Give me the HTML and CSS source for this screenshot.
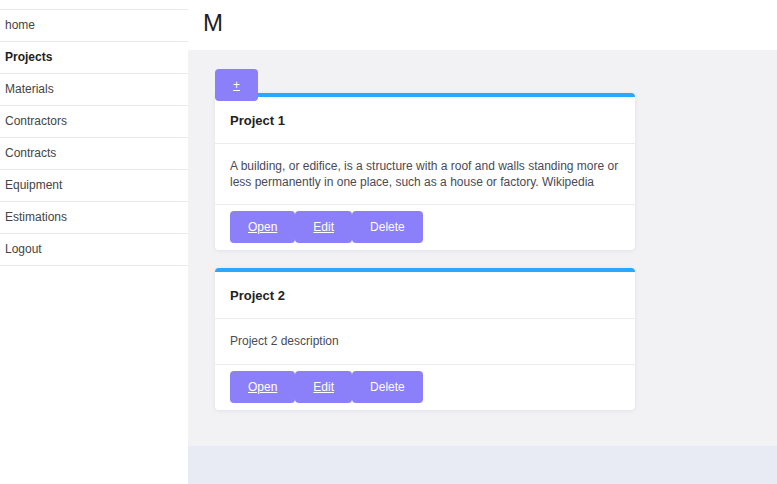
FILE: index.html
```html
<!DOCTYPE html>
<html>
<head>
<meta charset="utf-8">
<link rel="stylesheet" href="styles.css">
</head>
<body>
<div class="layout">
  <aside class="sidebar">
    <ul class="nav">
      <li class="nav-item">home</li>
      <li class="nav-item active">Projects</li>
      <li class="nav-item">Materials</li>
      <li class="nav-item">Contractors</li>
      <li class="nav-item">Contracts</li>
      <li class="nav-item">Equipment</li>
      <li class="nav-item">Estimations</li>
      <li class="nav-item">Logout</li>
    </ul>
  </aside>
  <main class="main">
    <header class="topbar"><h1 class="title">M</h1></header>
    <section class="content">
      <a class="add-btn">+</a>
      <div class="card first">
        <div class="card-header">Project 1</div>
        <div class="card-body">A building, or edifice, is a structure with a roof and walls standing more or less permanently in one place, such as a house or factory. Wikipedia</div>
        <div class="card-footer">
          <a class="btn link">Open</a><a class="btn link">Edit</a><span class="btn">Delete</span>
        </div>
      </div>
      <div class="card">
        <div class="card-header">Project 2</div>
        <div class="card-body single">Project 2 description</div>
        <div class="card-footer">
          <a class="btn link">Open</a><a class="btn link">Edit</a><span class="btn">Delete</span>
        </div>
      </div>
    </section>
    <div class="bottom-band"></div>
  </main>
</div>
</body>
</html>
```
FILE: styles.css
```css
html, body {
  margin: 0;
  padding: 0;
  height: 100%;
}
body {
  font-family: "Liberation Sans", Arial, sans-serif;
  font-size: 12px;
  color: #333;
  background: #fff;
}
.layout {
  display: flex;
  height: 484px;
}
.sidebar {
  width: 188px;
  flex: 0 0 188px;
  background: #fff;
  padding-top: 9px;
  box-sizing: border-box;
}
.nav {
  list-style: none;
  margin: 0;
  padding: 0;
  border-top: 1px solid #e9e9ef;
}
.nav-item {
  padding: 8px 5px;
  line-height: 15px;
  color: #444;
  border-bottom: 1px solid #e9e9ef;
}
.nav-item.active {
  font-weight: bold;
  color: #222;
}
.main {
  flex: 1;
  display: flex;
  flex-direction: column;
  min-width: 0;
}
.topbar {
  height: 50px;
  background: #fff;
  display: flex;
  align-items: center;
  padding-left: 15px;
}
.title {
  margin: 0;
  font-size: 24px;
  font-weight: normal;
  color: #1e1e28;
  line-height: 1;
  margin-top: -5px;
}
.content {
  background: #f2f2f5;
  padding: 19px 27px 36px;
  display: flex;
  flex-direction: column;
  align-items: flex-start;
}
.add-btn {
  position: relative;
  z-index: 1;
  display: flex;
  align-items: center;
  justify-content: center;
  width: 43px;
  height: 32px;
  background: #8c7ffa;
  color: #fff;
  border-radius: 4px;
  text-decoration: underline;
  font-size: 12px;
  margin-bottom: -8px;
}
.card {
  width: 420px;
  background: #fff;
  border-top: 4px solid #28a8fe;
  border-radius: 4px;
  box-shadow: 0 1px 4px rgba(30, 30, 60, 0.08);
  margin-top: 18px;
}
.card.first {
  margin-top: 0;
}
.card-header {
  padding: 16px 15px 14px;
  line-height: 16px;
  font-size: 13px;
  font-weight: bold;
  color: #222;
  border-bottom: 1px solid #ececf0;
}
.card-body {
  padding: 14px 15px 14px;
  line-height: 16px;
  color: #4a4a55;
  border-bottom: 1px solid #ececf0;
}
.card-body.single {
  padding-bottom: 15px;
}
.card-footer {
  padding: 6px 15px 7px;
  display: flex;
}
.btn {
  display: flex;
  align-items: center;
  height: 32px;
  padding: 0 18px;
  background: #8c7ffa;
  color: #fff;
  border-radius: 4px;
}
.btn.link {
  text-decoration: underline;
}
.bottom-band {
  flex: 1;
  background: #e8ebf4;
}
```
